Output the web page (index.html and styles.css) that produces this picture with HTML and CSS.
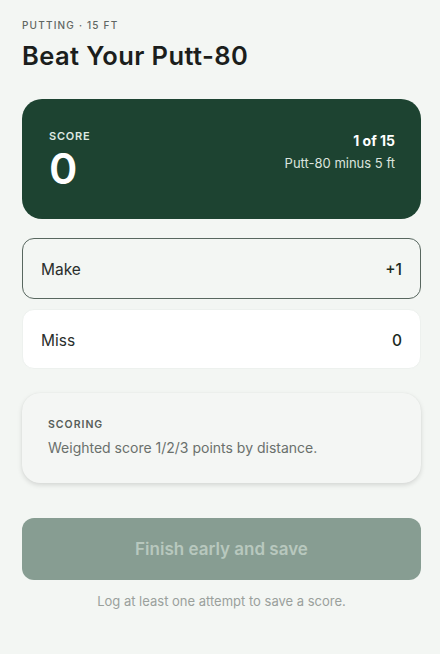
FILE: index.html
```html
<!DOCTYPE html>
<html>
<head>
<meta charset="utf-8">
<link rel="stylesheet" href="styles.css">
</head>
<body>
<main class="page">
  <header class="head">
    <div class="eyebrow">PUTTING · 15 FT</div>
    <h1 class="title">Beat Your Putt-80</h1>
  </header>
  <section class="score-card">
    <div class="score-left">
      <div class="score-label">SCORE</div>
      <div class="score-value">0</div>
    </div>
    <div class="score-right">
      <div class="progress">1 of 15</div>
      <div class="distance">Putt-80 minus 5 ft</div>
    </div>
  </section>
  <div class="options">
    <button class="option option-active"><span>Make</span><span class="pts">+1</span></button>
    <button class="option option-plain"><span>Miss</span><span class="pts">0</span></button>
  </div>
  <section class="info-card">
    <div class="info-label">SCORING</div>
    <div class="info-text">Weighted score 1/2/3 points by distance.</div>
  </section>
  <button class="finish" disabled>Finish early and save</button>
  <p class="hint">Log at least one attempt to save a score.</p>
</main>
</body>
</html>
```
FILE: styles.css
```css
* { box-sizing: border-box; }
html, body { margin: 0; padding: 0; }
body {
  background: #f3f6f3;
  font-family: "Inter", "Noto Sans", sans-serif;
  color: #1c211e;
  width: 440px;
  height: 654px;
  overflow: hidden;
}
.page {
  padding: 18px 19px 0 22px;
  display: flex;
  flex-direction: column;
}
.eyebrow {
  font-size: 10px;
  letter-spacing: 1.2px;
  color: #5f6662;
  font-weight: 500;
  line-height: 14px;
}
.title {
  margin: 8px 0 0;
  font-size: 25.5px;
  font-weight: 600;
  letter-spacing: 0.4px;
  line-height: 32px;
  color: #1b1e1c;
}
.score-card {
  margin-top: 27px;
  height: 120px;
  background: #1d4331;
  border-radius: 20px;
  padding: 30px 26px 0 27px;
  display: flex;
  justify-content: space-between;
  align-items: flex-start;
  color: #fff;
}
.score-label {
  font-size: 11px;
  font-weight: 600;
  letter-spacing: 0.8px;
  color: #dfe8e2;
  line-height: 14px;
}
.score-value {
  font-size: 43px;
  font-weight: 600;
  line-height: 46px;
  margin-top: 2px;
}
.score-right { text-align: right; }
.progress {
  font-size: 14px;
  font-weight: 700;
  line-height: 18px;
  margin-top: 3px;
}
.distance {
  font-size: 13px;
  color: #dbe4de;
  line-height: 16px;
  margin-top: 5px;
}
.options {
  margin-top: 19px;
  display: flex;
  flex-direction: column;
  gap: 10px;
}
.option {
  height: 61px;
  border-radius: 12px;
  display: flex;
  justify-content: space-between;
  align-items: center;
  padding: 2px 18px 0 18px;
  font-family: inherit;
  font-size: 15.5px;
  color: #2a2e2c;
  cursor: pointer;
}
.option-active {
  background: #f3f6f3;
  border: 1px solid #58675f;
}
.option-plain {
  background: #ffffff;
  border: 1px solid #edf1ee;
  height: 60px;
}
.pts { font-weight: 500; color: #1c2a22; }
.info-card {
  margin-top: 24px;
  height: 90px;
  border-radius: 18px;
  background: #f4f6f4;
  box-shadow: 0 2px 5px rgba(0,0,0,0.13), 0 0 1px rgba(0,0,0,0.08);
  padding: 25px 26px 0 26px;
}
.info-label {
  font-size: 10.5px;
  font-weight: 600;
  letter-spacing: 1px;
  color: #565d59;
  line-height: 14px;
}
.info-text {
  margin-top: 7px;
  font-size: 14px;
  color: #6a706c;
  line-height: 18px;
}
.finish {
  margin-top: 35px;
  height: 62px;
  border: none;
  border-radius: 12px;
  background: #879d92;
  color: #b8c8be;
  font-family: inherit;
  font-size: 17px;
  font-weight: 600;
}
.hint {
  margin: 13px 0 0;
  text-align: center;
  font-size: 13px;
  color: #9aa09c;
  line-height: 16px;
}
```
